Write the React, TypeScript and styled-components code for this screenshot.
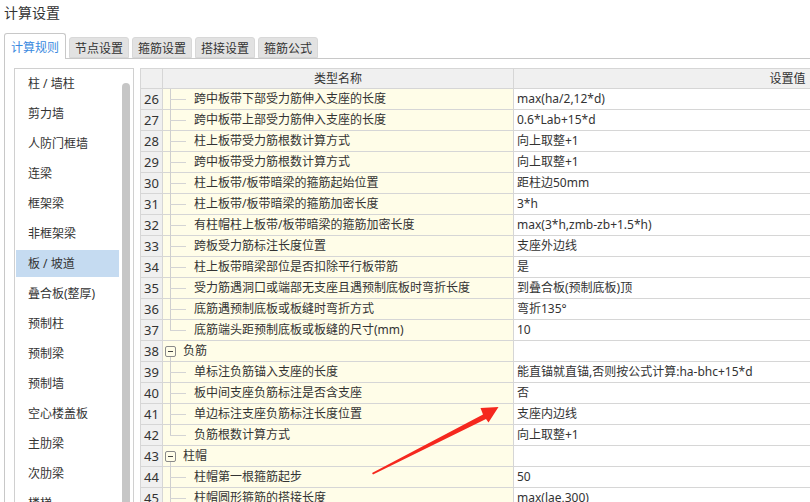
import React from 'react';
import styled, { createGlobalStyle, css } from 'styled-components';

const GlobalStyle = createGlobalStyle`
  html, body { margin: 0; padding: 0; background: #fff; }
  body {
    font-family: "Noto Sans", "Noto Sans CJK SC", sans-serif;
    color: #333;
  }
  #root { width: 810px; height: 502px; overflow: hidden; }
`;

const Page = styled.div`
  position: relative;
  width: 810px;
  height: 502px;
  overflow: hidden;
  display: flex;
  flex-direction: column;
  padding-left: 4px;
  box-sizing: border-box;
`;

const Title = styled.div`
  height: 33px;
  padding-top: 3px;
  box-sizing: border-box;
  font-size: 14px;
  line-height: 20px;
  color: #333;
  flex-shrink: 0;
`;

const TabBar = styled.div`
  display: flex;
  align-items: flex-end;
  gap: 3px;
  height: 26px;
  margin-bottom: -1px;
  position: relative;
  z-index: 1;
  flex-shrink: 0;
`;

const Tab = styled.div<{ $active?: boolean }>`
  font-size: 12px;
  box-sizing: border-box;
  display: flex;
  align-items: center;
  border: 1px solid;
  border-radius: 3px 3px 0 0;
  white-space: nowrap;
  ${(p) =>
    p.$active
      ? css`
          height: 26px;
          padding: 0 6px;
          border-color: #c8c8c8;
          border-bottom: none;
          background: #fff;
          color: #3a8ae0;
        `
      : css`
          height: 21px;
          margin-bottom: 1px;
          padding: 0 5px;
          border-color: #d8d8d8;
          background: #e2e2e2;
          color: #333;
        `}
`;

const Panel = styled.div`
  flex: 1;
  display: flex;
  align-items: flex-start;
  gap: 6px;
  border-top: 1px solid #c8c8c8;
  border-left: 1px solid #c8c8c8;
  padding: 9px 0 0 9px;
  overflow: hidden;
  min-height: 0;
`;

const ListBox = styled.div`
  width: 120px;
  height: 470px;
  box-sizing: border-box;
  border: 1px solid #d0d0d0;
  display: flex;
  flex-shrink: 0;
  overflow: hidden;
`;

const Items = styled.div`
  width: 105px;
  box-sizing: border-box;
  padding: 1px 1px 0;
  display: flex;
  flex-direction: column;
  gap: 3px;
`;

const Item = styled.div<{ $selected?: boolean }>`
  height: 27px;
  line-height: 27px;
  padding-left: 12px;
  font-size: 12px;
  flex-shrink: 0;
  white-space: nowrap;
  color: #333;
  background: ${(p) => (p.$selected ? '#c5dbf1' : 'transparent')};
`;

const Track = styled.div`
  width: 13px;
  padding-left: 2px;
  box-sizing: border-box;
`;

const Thumb = styled.div`
  width: 8px;
  margin-top: 14px;
  height: 600px;
  background: #c6c6c6;
  border-radius: 4px;
`;

const Table = styled.div`
  width: 921px;
  flex-shrink: 0;
  border-top: 1px solid #d6d6d6;
  border-left: 1px solid #d6d6d6;
`;

const Row = styled.div<{ $header?: boolean }>`
  display: grid;
  grid-template-columns: 22px 351px 548px;
  height: ${(p) => (p.$header ? 20 : 21)}px;
`;

const cellBase = css`
  box-sizing: border-box;
  border-right: 1px solid #d6d6d6;
  border-bottom: 1px solid #d6d6d6;
  font-size: 12px;
  line-height: 20px;
  white-space: nowrap;
  overflow: hidden;
`;

const HeaderCell = styled.div<{ $align?: string }>`
  ${cellBase};
  line-height: 19px;
  background: #f0f0f0;
  text-align: ${(p) => p.$align || 'center'};
`;

const NumCell = styled.div`
  ${cellBase};
  background: #f0f0f0;
  font-size: 13px;
  text-align: center;
`;

const NameCell = styled.div`
  ${cellBase};
  background: #fffde8;
  display: flex;
  align-items: stretch;
  overflow: visible;
  position: relative;
`;

const ValueCell = styled.div`
  ${cellBase};
  background: #fff;
  padding-left: 3px;
`;

const Connector = styled.span<{ $last?: boolean }>`
  position: relative;
  width: 16px;
  margin-left: 7px;
  flex-shrink: 0;
  &::before {
    content: '';
    position: absolute;
    left: 0;
    top: 0;
    width: 1px;
    height: ${(p) => (p.$last ? '10px' : '21px')};
    background: #cfcfcf;
  }
  &::after {
    content: '';
    position: absolute;
    left: 0;
    top: 10px;
    width: 16px;
    height: 1px;
    background: #d4d4d4;
  }
`;

const Toggle = styled.span`
  position: relative;
  margin-left: 2px;
  width: 11px;
  height: 11px;
  box-sizing: border-box;
  border: 1px solid #8a8a8a;
  border-radius: 2px;
  align-self: center;
  flex-shrink: 0;
  &::before {
    content: '';
    position: absolute;
    left: 2px;
    top: 4px;
    width: 5px;
    height: 1px;
    background: #444;
  }
  &::after {
    content: '';
    position: absolute;
    left: 4px;
    top: 10px;
    width: 1px;
    height: 7px;
    background: #cfcfcf;
  }
`;

const Label = styled.span<{ $group?: boolean }>`
  margin-left: ${(p) => (p.$group ? 7 : 8)}px;
  color: #333;
`;

const Overlay = styled.svg`
  position: absolute;
  left: 0;
  top: 0;
  width: 810px;
  height: 502px;
  pointer-events: none;
`;

type RowData = { n: number; name: string; value: string; kind: 'mid' | 'last' | 'group' };

const rows: RowData[] = [
  { n: 26, name: '跨中板带下部受力筋伸入支座的长度', value: 'max(ha/2,12*d)', kind: 'mid' },
  { n: 27, name: '跨中板带上部受力筋伸入支座的长度', value: '0.6*Lab+15*d', kind: 'mid' },
  { n: 28, name: '柱上板带受力筋根数计算方式', value: '向上取整+1', kind: 'mid' },
  { n: 29, name: '跨中板带受力筋根数计算方式', value: '向上取整+1', kind: 'mid' },
  { n: 30, name: '柱上板带/板带暗梁的箍筋起始位置', value: '距柱边50mm', kind: 'mid' },
  { n: 31, name: '柱上板带/板带暗梁的箍筋加密长度', value: '3*h', kind: 'mid' },
  { n: 32, name: '有柱帽柱上板带/板带暗梁的箍筋加密长度', value: 'max(3*h,zmb-zb+1.5*h)', kind: 'mid' },
  { n: 33, name: '跨板受力筋标注长度位置', value: '支座外边线', kind: 'mid' },
  { n: 34, name: '柱上板带暗梁部位是否扣除平行板带筋', value: '是', kind: 'mid' },
  { n: 35, name: '受力筋遇洞口或端部无支座且遇预制底板时弯折长度', value: '到叠合板(预制底板)顶', kind: 'mid' },
  { n: 36, name: '底筋遇预制底板或板缝时弯折方式', value: '弯折135°', kind: 'mid' },
  { n: 37, name: '底筋端头距预制底板或板缝的尺寸(mm)', value: '10', kind: 'last' },
  { n: 38, name: '负筋', value: '', kind: 'group' },
  { n: 39, name: '单标注负筋锚入支座的长度', value: '能直锚就直锚,否则按公式计算:ha-bhc+15*d', kind: 'mid' },
  { n: 40, name: '板中间支座负筋标注是否含支座', value: '否', kind: 'mid' },
  { n: 41, name: '单边标注支座负筋标注长度位置', value: '支座内边线', kind: 'mid' },
  { n: 42, name: '负筋根数计算方式', value: '向上取整+1', kind: 'last' },
  { n: 43, name: '柱帽', value: '', kind: 'group' },
  { n: 44, name: '柱帽第一根箍筋起步', value: '50', kind: 'mid' },
  { n: 45, name: '柱帽圆形箍筋的搭接长度', value: 'max(lae,300)', kind: 'mid' },
];

const listItems = [
  '柱 / 墙柱',
  '剪力墙',
  '人防门框墙',
  '连梁',
  '框架梁',
  '非框架梁',
  '板 / 坡道',
  '叠合板(整厚)',
  '预制柱',
  '预制梁',
  '预制墙',
  '空心楼盖板',
  '主肋梁',
  '次肋梁',
  '楼梯',
];

const tabs = ['计算规则', '节点设置', '箍筋设置', '搭接设置', '箍筋公式'];

export default function App() {
  return (
    <>
      <GlobalStyle />
      <Page>
        <Title>计算设置</Title>
        <TabBar>
          {tabs.map((t, i) => (
            <Tab key={t} $active={i === 0}>
              {t}
            </Tab>
          ))}
        </TabBar>
        <Panel>
          <ListBox>
            <Items>
              {listItems.map((it) => (
                <Item key={it} $selected={it === '板 / 坡道'}>
                  {it}
                </Item>
              ))}
            </Items>
            <Track>
              <Thumb />
            </Track>
          </ListBox>
          <Table>
            <Row $header>
              <HeaderCell />
              <HeaderCell>类型名称</HeaderCell>
              <HeaderCell>设置值</HeaderCell>
            </Row>
            {rows.map((r) => (
              <Row key={r.n}>
                <NumCell>{r.n}</NumCell>
                <NameCell>
                  {r.kind === 'group' ? (
                    <>
                      <Toggle />
                      <Label $group>{r.name}</Label>
                    </>
                  ) : (
                    <>
                      <Connector $last={r.kind === 'last'} />
                      <Label>{r.name}</Label>
                    </>
                  )}
                </NameCell>
                <ValueCell>{r.value}</ValueCell>
              </Row>
            ))}
          </Table>
        </Panel>
        <Overlay viewBox="0 0 810 502">
          <polygon
            points="372,473 483,414.5 480.5,408 498.5,407 488.5,422.5 486,419 373,474.5"
            fill="#f5281e"
          />
        </Overlay>
      </Page>
    </>
  );
}
